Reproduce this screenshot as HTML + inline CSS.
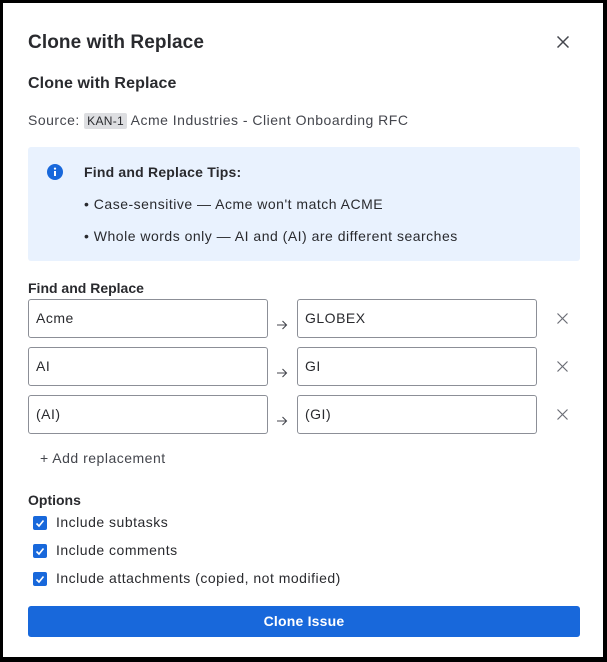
<!DOCTYPE html>
<html><head><meta charset="utf-8"><style>
*{margin:0;padding:0;box-sizing:border-box}
body{width:607px;height:662px;background:#000;font-family:"Liberation Sans",sans-serif;color:#292a2e;position:relative;overflow:hidden}
.card{position:absolute;left:3px;top:3px;width:600px;height:654px;background:#fff}
.a{position:absolute;white-space:nowrap}
.t{letter-spacing:0.5px}
.inp{position:absolute;height:39px;border:1px solid #8c8f97;border-radius:3px;font-size:14px;line-height:37px;padding-left:7px;color:#292a2e;letter-spacing:0.5px}
.cb{position:absolute;left:33px;width:14px;height:14px;background:#1868db;border-radius:2px}
.lab{position:absolute;left:56px;font-size:14px;color:#292a2e;letter-spacing:0.5px;white-space:nowrap}
</style></head><body>
<div class="card"></div>
<div class="a" style="left:28px;top:32px;font-size:19px;font-weight:bold;letter-spacing:0.1px">Clone with Replace</div>
<svg class="a" style="left:557px;top:36px" width="12" height="12" viewBox="0 0 12 12"><path d="M0.5 0.5L11.5 11.5M11.5 0.5L0.5 11.5" stroke="#44464d" stroke-width="1.5"/></svg>
<div class="a" style="left:28px;top:75px;font-size:16px;font-weight:bold;letter-spacing:0.1px">Clone with Replace</div>
<div class="a t" style="left:28px;top:112px;font-size:14px;color:#44464d">Source: <span style="background:#dddee1;padding:1px 3px;font-size:12px;border-radius:2px;color:#292a2e;letter-spacing:0.3px">KAN-1</span> Acme Industries - Client Onboarding RFC</div>
<div class="a" style="left:28px;top:147px;width:552px;height:114px;background:#e9f2fe;border-radius:3px"></div>
<svg class="a" style="left:47px;top:164px" width="16" height="16" viewBox="0 0 16 16"><circle cx="8" cy="8" r="8" fill="#1868db"/><rect x="7" y="7" width="2" height="5" fill="#fff"/><circle cx="8" cy="4.6" r="1.1" fill="#fff"/></svg>
<div class="a" style="left:84px;top:164px;font-size:14px;font-weight:bold;letter-spacing:0.2px">Find and Replace Tips:</div>
<div class="a t" style="left:84px;top:196px;font-size:14px">• Case-sensitive — Acme won't match ACME</div>
<div class="a t" style="left:84px;top:228px;font-size:14px">• Whole words only — AI and (AI) are different searches</div>
<div class="a" style="left:28px;top:280px;font-size:14px;font-weight:bold">Find and Replace</div>
<div class="inp" style="left:28px;top:299px;width:240px">Acme</div>
<div class="inp" style="left:297px;top:299px;width:240px">GLOBEX</div>
<div class="inp" style="left:28px;top:347px;width:240px">AI</div>
<div class="inp" style="left:297px;top:347px;width:240px">GI</div>
<div class="inp" style="left:28px;top:395px;width:240px">(AI)</div>
<div class="inp" style="left:297px;top:395px;width:240px">(GI)</div>
<svg class="a" style="left:276px;top:320px" width="12" height="10" viewBox="0 0 12 10"><path d="M1 5H10.5M6.5 1L10.5 5L6.5 9" stroke="#44464d" stroke-width="1.1" fill="none"/></svg>
<svg class="a" style="left:276px;top:368px" width="12" height="10" viewBox="0 0 12 10"><path d="M1 5H10.5M6.5 1L10.5 5L6.5 9" stroke="#44464d" stroke-width="1.1" fill="none"/></svg>
<svg class="a" style="left:276px;top:416px" width="12" height="10" viewBox="0 0 12 10"><path d="M1 5H10.5M6.5 1L10.5 5L6.5 9" stroke="#44464d" stroke-width="1.1" fill="none"/></svg>
<svg class="a" style="left:557px;top:313px" width="11" height="11" viewBox="0 0 11 11"><path d="M0.5 0.5L10.5 10.5M10.5 0.5L0.5 10.5" stroke="#6b6e76" stroke-width="1.2"/></svg>
<svg class="a" style="left:557px;top:361px" width="11" height="11" viewBox="0 0 11 11"><path d="M0.5 0.5L10.5 10.5M10.5 0.5L0.5 10.5" stroke="#6b6e76" stroke-width="1.2"/></svg>
<svg class="a" style="left:557px;top:409px" width="11" height="11" viewBox="0 0 11 11"><path d="M0.5 0.5L10.5 10.5M10.5 0.5L0.5 10.5" stroke="#6b6e76" stroke-width="1.2"/></svg>
<div class="a t" style="left:40px;top:450px;font-size:14px;color:#44464d">+ Add replacement</div>
<div class="a" style="left:28px;top:492px;font-size:14px;font-weight:bold">Options</div>
<div class="cb" style="top:516px"></div><div class="cb" style="top:544px"></div><div class="cb" style="top:572px"></div>
<svg class="a" style="left:33px;top:516px" width="14" height="70" viewBox="0 0 14 70"><path d="M3.5 7.5L6 10L10.5 4.5M3.5 35.5L6 38L10.5 32.5M3.5 63.5L6 66L10.5 60.5" stroke="#fff" stroke-width="1.6" fill="none"/></svg>
<div class="lab" style="top:514px">Include subtasks</div>
<div class="lab" style="top:542px">Include comments</div>
<div class="lab" style="top:570px">Include attachments (copied, not modified)</div>
<div class="a" style="left:28px;top:606px;width:552px;height:31px;background:#1868db;border-radius:3px;color:#fff;font-size:14px;font-weight:bold;text-align:center;line-height:31px;letter-spacing:0.2px">Clone Issue</div>
</body></html>
